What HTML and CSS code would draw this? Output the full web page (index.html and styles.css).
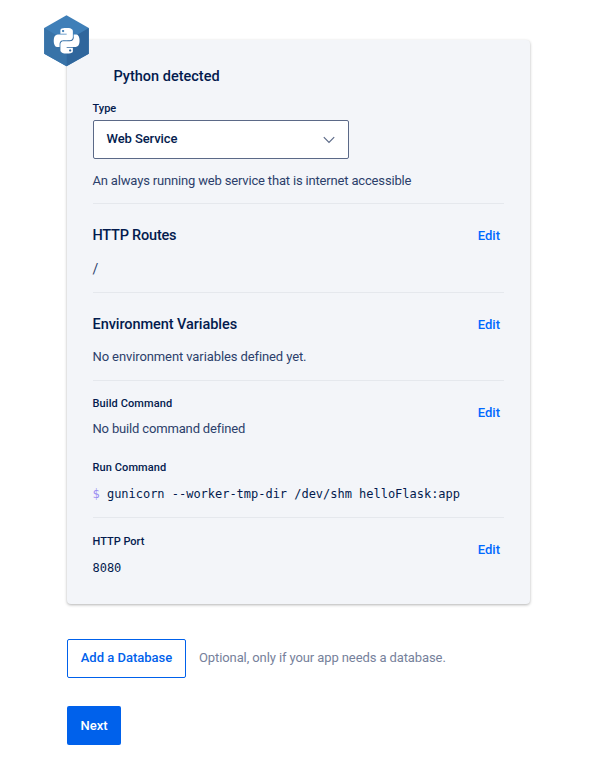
FILE: index.html
```html
<!DOCTYPE html>
<html lang="en">
<head>
<meta charset="utf-8">
<title>App configuration</title>
<link rel="stylesheet" href="styles.css">
</head>
<body>
<main class="page">
  <section class="card">
    <svg class="badge" viewBox="0 0 45 52" aria-hidden="true">
      <path fill="#3f7fb8" d="M22.5.2 44.8 13v25.8L22.5 51.2.2 38.8V13z"/>
      <path fill="#3873a8" d="M.2 13 22.5 25.9v25.3L.2 38.8z"/>
      <path fill="#2f669c" d="M44.8 13 22.5 25.9v25.3l22.3-12.4z"/>
      <path class="snake" transform="translate(9.8 12.9) scale(1.07)" d="M14.25.18l.9.2.73.26.59.3.45.32.34.34.25.34.16.33.1.3.04.26.02.2-.01.13V8.5l-.05.63-.13.55-.21.46-.26.38-.3.31-.33.25-.35.19-.35.14-.33.1-.3.07-.26.04-.21.02H8.77l-.69.05-.59.14-.5.22-.41.27-.33.32-.27.35-.2.36-.15.37-.1.35-.07.32-.04.27-.02.21v3.06H3.17l-.21-.03-.28-.07-.32-.12-.35-.18-.36-.26-.36-.36-.35-.46-.32-.59-.28-.73-.21-.88-.14-1.05-.05-1.23.06-1.22.16-1.04.24-.87.32-.71.36-.57.4-.44.42-.33.42-.24.4-.16.36-.1.32-.05.24-.01h.16l.06.01h8.16v-.83H6.18l-.01-2.75-.02-.37.05-.34.11-.31.17-.28.25-.26.31-.23.38-.2.44-.18.51-.15.58-.12.64-.1.71-.06.77-.04.84-.02 1.27.05zm-6.3 1.98l-.23.33-.08.41.08.41.23.34.33.22.41.09.41-.09.33-.22.23-.34.08-.41-.08-.41-.23-.33-.33-.22-.41-.09-.41.09zm13.09 3.95l.28.06.32.12.35.18.36.27.36.35.35.47.32.59.28.73.21.88.14 1.04.05 1.23-.06 1.23-.16 1.04-.24.86-.32.71-.36.57-.4.45-.42.33-.42.24-.4.16-.36.09-.32.05-.24.02-.16-.01h-8.22v.82h5.84l.01 2.76.02.36-.05.34-.11.31-.17.29-.25.25-.31.24-.38.2-.44.17-.51.15-.58.13-.64.09-.71.07-.77.04-.84.01-1.27-.04-1.07-.14-.9-.2-.73-.25-.59-.3-.45-.33-.34-.34-.25-.34-.16-.33-.1-.3-.04-.25-.02-.2.01-.13v-5.34l.05-.64.13-.54.21-.46.26-.38.3-.32.33-.24.35-.2.35-.14.33-.1.3-.06.26-.04.21-.02.13-.01h5.84l.69-.05.59-.14.5-.21.41-.28.33-.32.27-.35.2-.36.15-.36.1-.35.07-.32.04-.28.02-.21V6.07h2.09l.14.01zm-6.47 14.25l-.23.33-.08.41.08.41.23.33.33.23.41.08.41-.08.33-.23.23-.33.08-.41-.08-.41-.23-.33-.33-.23-.41-.08-.41.08z"/>
    </svg>
    <div class="block block-type">
      <h2 class="heading detected">Python detected</h2>
      <div class="label type-label">Type</div>
      <div class="select" role="combobox">
        <span class="select-value">Web Service</span>
        <svg class="chevron" viewBox="0 0 12 8" aria-hidden="true"><path d="M.8 1.2 6 6.4l5.2-5.2"/></svg>
      </div>
      <p class="text description">An always running web service that is internet accessible</p>
    </div>
    <div class="block block-routes">
      <div>
        <h2 class="heading routes-heading">HTTP Routes</h2>
        <p class="text route">/</p>
      </div>
      <a class="edit">Edit</a>
    </div>
    <div class="block block-env">
      <div>
        <h2 class="heading env-heading">Environment Variables</h2>
        <p class="text env-text">No environment variables defined yet.</p>
      </div>
      <a class="edit">Edit</a>
    </div>
    <div class="block block-commands">
      <div>
        <div class="label build-label">Build Command</div>
        <p class="text build-text">No build command defined</p>
        <div class="label run-label">Run Command</div>
        <code class="code"><span class="prompt">$</span> gunicorn --worker-tmp-dir /dev/shm helloFlask:app</code>
      </div>
      <a class="edit">Edit</a>
    </div>
    <div class="block block-port">
      <div>
        <div class="label">HTTP Port</div>
        <code class="code">8080</code>
      </div>
      <a class="edit">Edit</a>
    </div>
  </section>
  <div class="database">
    <button class="button outline">Add a Database</button>
    <span class="hint">Optional, only if your app needs a database.</span>
  </div>
  <button class="button primary">Next</button>
</main>
</body>
</html>
```
FILE: styles.css
```css
* { box-sizing: border-box; }
body {
  margin: 0;
  background: #fff;
  color: #031b4e;
  font: 13px/20px Roboto, "Liberation Sans", sans-serif;
}
h2, p { margin: 0; }
.page { padding: 40px 62px 0 67px; }
.card {
  position: relative;
  width: 463px;
  height: 564px;
  padding: 0 26px 0 25.5px;
  background: #f3f5f9;
  border-radius: 4px;
  box-shadow: 0 1px 3px rgba(0, 0, 0, .3);
}
.badge {
  position: absolute;
  left: -23px;
  top: -25px;
  width: 45px;
  height: 52px;
}
.snake { fill: #fff; }
.block {
  display: flex;
  justify-content: space-between;
  align-items: flex-start;
  border-bottom: 1px solid #e5e8ed;
}
.block-type { display: block; height: 164px; padding-top: 27px; }
.block-routes { height: 89px; padding-top: 22px; }
.block-env { height: 88px; padding-top: 22px; }
.block-commands { height: 137px; padding-top: 13px; }
.block-port { border: 0; padding-top: 14px; }
.heading { font-size: 14.5px; line-height: 20px; font-weight: 500; }
.detected { padding-left: 21px; }
.routes-heading { letter-spacing: -.22px; }
.env-heading { letter-spacing: -.06px; }
.label { font-size: 11px; line-height: 20px; font-weight: 500; }
.build-label, .run-label { letter-spacing: .1px; }
.type-label { margin-top: 12px; }
.select {
  display: flex;
  align-items: center;
  justify-content: space-between;
  width: 256px;
  height: 39px;
  margin: 1px 0 0 .5px;
  padding: 0 13px 0 12.5px;
  background: #fff;
  border: 1px solid #5b6987;
  border-radius: 2px;
}
.select-value { padding-bottom: 2px; font-weight: 500; letter-spacing: -.08px; }
.chevron { width: 12px; height: 8px; }
.chevron path { fill: none; stroke: #5b6987; stroke-width: 1.2; }
.text { color: #2c3f6b; }
.description { margin-top: 12px; letter-spacing: -.17px; }
.route { margin-top: 13px; font-size: 14px; }
.env-text { margin-top: 12px; letter-spacing: -.1px; }
.build-text { margin-top: 5px; letter-spacing: -.16px; }
.run-label { margin-top: 19px; }
.code {
  display: block;
  margin-top: 6px;
  font: 12px/20px "DejaVu Sans Mono", monospace;
  letter-spacing: -.02px;
}
.prompt { color: #9b8df2; }
.edit { margin-right: 4px; color: #0069ff; font-weight: 500; }
.block-commands .edit { margin-top: 9px; }
.block-port .edit { margin-top: 8px; }
.database { display: flex; align-items: center; margin-top: 35px; }
.button {
  height: 39px;
  padding: 0;
  border-radius: 2px;
  font: 500 13px/20px Roboto, "Liberation Sans", sans-serif;
}
.outline { width: 119px; padding-bottom: 2px; background: #fff; border: 1px solid #0061eb; color: #0061eb; }
.hint { margin-left: 13px; padding-bottom: 2px; color: #76819b; letter-spacing: -.1px; }
.primary { display: block; width: 54px; margin-top: 28px; background: #0061eb; border: 0; color: #fff; }
```
